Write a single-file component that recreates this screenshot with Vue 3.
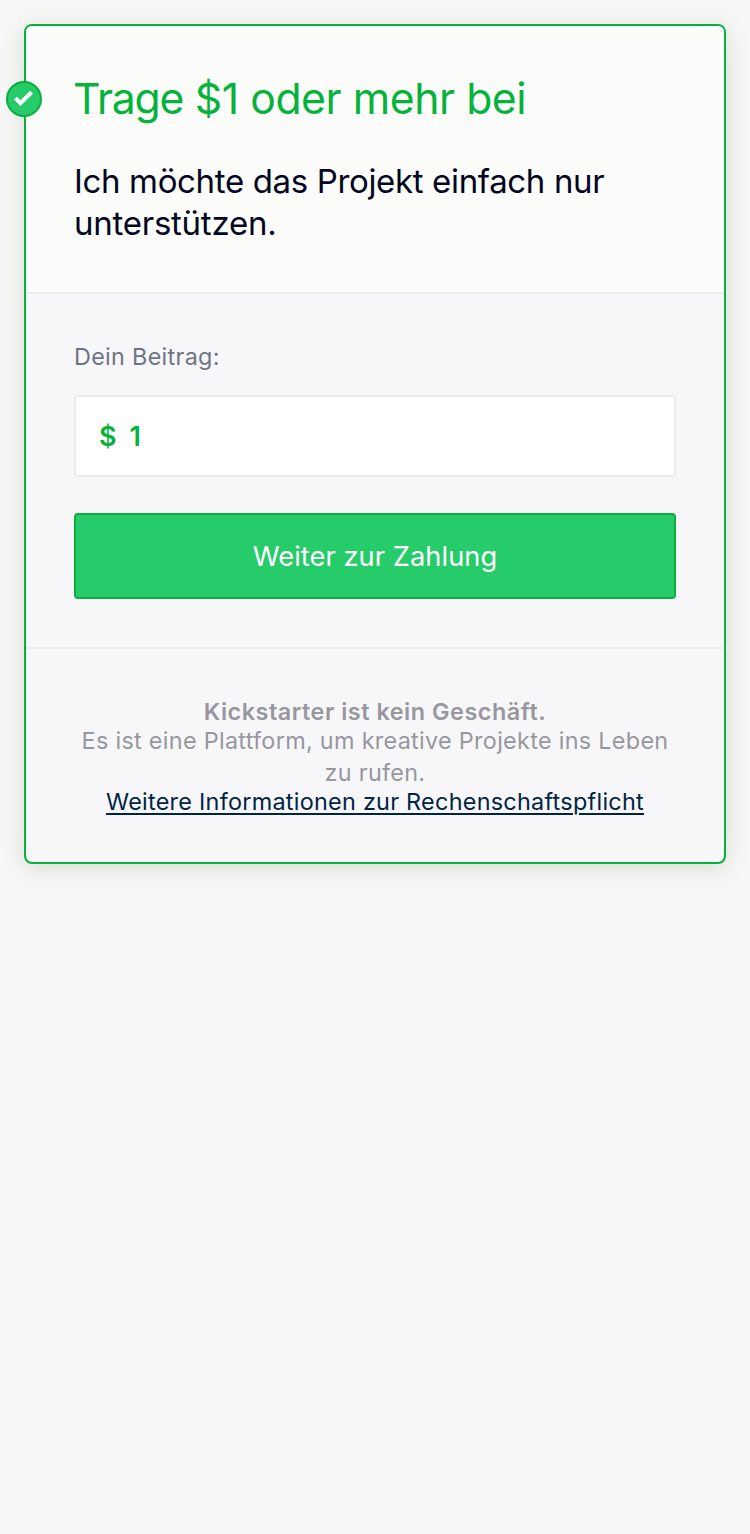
<script setup>
import { ref } from 'vue'

const amount = ref('1')
</script>

<template>
  <main class="page">
    <section class="card">
      <header class="intro">
        <span class="badge">
          <svg viewBox="0 0 36 36" width="36" height="36" aria-hidden="true">
            <circle cx="18" cy="18" r="17" />
            <path d="M9.4 17.2 14.4 22.2 25.5 11.3" />
          </svg>
        </span>
        <h1 class="title"><span class="title-verb">Trage</span> $1 oder mehr bei</h1>
        <p class="lead">
          <span class="lead-first">Ich möchte das Projekt einfach nur</span>
          <span class="lead-second">unterstützen.</span>
        </p>
      </header>
      <div class="pledge">
        <label class="label">Dein Beitrag:</label>
        <div class="field">
          <span class="currency">$</span>
          <span class="value">{{ amount }}</span>
        </div>
        <button class="submit" type="button"><span>Weiter zur Zahlung</span></button>
      </div>
      <footer class="notice">
        <strong>Kickstarter ist kein Geschäft.</strong>
        <p>Es ist eine Plattform, um kreative Projekte ins Leben<br />zu rufen.</p>
        <a>Weitere Informationen zur Rechenschaftspflicht</a>
      </footer>
    </section>
  </main>
</template>

<style>
html,
body {
  background: #f7f7f5;
}
</style>

<style scoped>
.page {
  box-sizing: border-box;
  min-height: 1534px;
  padding: 24px;
  background: #f7f7f5;
  font-family: Inter, "Liberation Sans", sans-serif;
}
.card {
  box-sizing: border-box;
  height: 840px;
  border: 2px solid #05b23c;
  border-radius: 8px;
  background: #f7f7fa;
  box-shadow: 0 4px 24px rgba(0, 0, 0, 0.12);
}
.intro {
  position: relative;
  box-sizing: border-box;
  height: 268px;
  padding: 46px 48px 0;
  border-bottom: 2px solid #ececec;
  border-radius: 6px 6px 0 0;
  background: #fcfcfa;
}
.badge {
  position: absolute;
  top: 55px;
  left: -20px;
  width: 36px;
  height: 36px;
}
.badge svg {
  display: block;
}
.badge circle {
  fill: #25cc69;
  stroke: #0bae40;
  stroke-width: 2;
}
.badge path {
  fill: none;
  stroke: #fff;
  stroke-width: 4;
}
.title {
  margin: 0 0 0 -1px;
  color: #05b23c;
  font-size: 42.7px;
  font-weight: 400;
  line-height: 54px;
  letter-spacing: -0.44px;
  white-space: nowrap;
}
.title-verb {
  letter-spacing: -1.2px;
}
.lead {
  margin: 34px 0 0;
  color: #020621;
  font-size: 33px;
  line-height: 42px;
  white-space: nowrap;
}
.lead span {
  display: block;
}
.lead-first {
  letter-spacing: -0.35px;
}
.lead-second {
  letter-spacing: -0.25px;
}
.pledge {
  box-sizing: border-box;
  height: 355px;
  padding: 47px 48px 0;
  border-bottom: 2px solid #ececee;
}
.label {
  display: block;
  color: #6f7485;
  font-size: 23.4px;
  line-height: 32px;
  letter-spacing: 0.3px;
}
.field {
  display: flex;
  align-items: center;
  box-sizing: border-box;
  height: 82px;
  margin-top: 22px;
  padding-left: 23px;
  border: 2px solid #ececee;
  border-radius: 4px;
  background: #fff;
  color: #05b23c;
  font-size: 27px;
  font-weight: 600;
}
.value {
  margin-left: 13px;
}
.submit {
  display: block;
  box-sizing: border-box;
  width: 100%;
  height: 86px;
  margin-top: 36px;
  padding: 2px 0 0;
  border: 2px solid #0bae40;
  border-radius: 4px;
  background: #25cc69;
  color: #fff;
  font-family: inherit;
  font-size: 27.3px;
  line-height: 80px;
  letter-spacing: 0.03px;
}
.notice {
  padding: 49px 48px 0;
  color: #98979f;
  font-size: 23.4px;
  text-align: center;
  white-space: nowrap;
}
.notice strong {
  display: block;
  font-weight: 600;
  line-height: 28px;
  letter-spacing: 0.53px;
}
.notice p {
  margin: -1px 0;
  line-height: 32px;
  letter-spacing: 0.3px;
}
.notice a {
  display: block;
  color: #022444;
  line-height: 28px;
  letter-spacing: 0.27px;
  text-decoration: underline;
  text-decoration-thickness: 2px;
  text-underline-offset: 3px;
}
</style>
